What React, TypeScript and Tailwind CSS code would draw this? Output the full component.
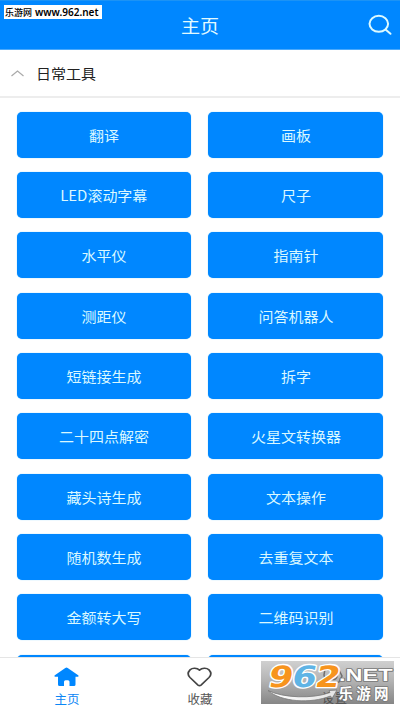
const tools = [
  '翻译', '画板',
  'LED滚动字幕', '尺子',
  '水平仪', '指南针',
  '测距仪', '问答机器人',
  '短链接生成', '拆字',
  '二十四点解密', '火星文转换器',
  '藏头诗生成', '文本操作',
  '随机数生成', '去重复文本',
  '金额转大写', '二维码识别',
  '', '',
];

function Watermark() {
  return (
    <svg className="absolute left-[261px] top-[661px] w-[133px] h-[43px]" viewBox="0 0 133 43">
      <defs>
        <linearGradient id="plate" x1="0" y1="0" x2="0" y2="1">
          <stop offset="0" stopColor="#d0d0d0" />
          <stop offset="0.45" stopColor="#b4b4b4" />
          <stop offset="1" stopColor="#868686" />
        </linearGradient>
        <linearGradient id="swoosh" x1="0" y1="0" x2="1" y2="0">
          <stop offset="0" stopColor="#ffffff" />
          <stop offset="1" stopColor="#e4e4e4" />
        </linearGradient>
      </defs>
      <rect width="133" height="43" fill="url(#plate)" />
      {/* the settings tab shows through the plate */}
      <g fill="none" stroke="#6f6f6f" strokeWidth="1.500">
        <path d="M64 8l5 1 4-2 5 2 3 6-3 6-4 2-6-1-4-3-1-5z" />
        <circle cx="72.500" cy="15" r="3.500" />
      </g>
      <text x="61" y="42" fontSize="12" fill="#4d4d4d" textLength="25">设置</text>
      <path d="M7 29.500C22 37 52 38 69 31.500l-1-2 8-.5-5 8.500-1.500-2.500C50 43 20 41 7 29.500z" fill="url(#swoosh)" stroke="#777" strokeWidth="0.800" />
      <g
        fontFamily="'DejaVu Sans', sans-serif"
        fontSize="29.500"
        fontWeight="700"
        stroke="#fff"
        strokeWidth="2.600"
        strokeLinejoin="round"
        paintOrder="stroke"
        transform="translate(0 25.500) skewX(-11)"
      >
        <text x="6" y="0" fill="#f7941d" textLength="24.500" lengthAdjust="spacingAndGlyphs">9</text>
        <text x="29.500" y="0" fill="#5fb4e5" textLength="24.500" lengthAdjust="spacingAndGlyphs">6</text>
        <text x="53" y="0" fill="#f7941d" textLength="24.500" lengthAdjust="spacingAndGlyphs">2</text>
      </g>
      <g fill="#fff" stroke="#777" strokeWidth="1.600" paintOrder="stroke" strokeLinejoin="round" fontWeight="700">
        <text x="78" y="20" fontSize="17" fontFamily="'Liberation Sans', sans-serif" textLength="53.500" lengthAdjust="spacingAndGlyphs">.NET</text>
        <text x="77.500" y="37.500" fontSize="14.500" textLength="50">乐游网</text>
      </g>
    </svg>
  );
}

export default function App() {
  return (
    <div className="relative flex flex-col w-[400px] h-[710px] overflow-hidden bg-white font-['Noto_Sans_CJK_SC',sans-serif]">
      <header className="relative flex h-[50px] shrink-0 items-center justify-center bg-[#0087ff] border-t border-b border-t-[#1c93f5] border-b-[#4ba9fb]">
        <h1 className="text-[18px] leading-none text-[#e2faff] scale-x-[1.06]">主页</h1>
        <svg className="absolute left-[368px] top-[13px] w-[26px] h-[22px]" viewBox="0 0 26 22" fill="none" stroke="#dcfaff" strokeWidth="2" strokeLinecap="round">
          <ellipse cx="10.800" cy="9.800" rx="9.300" ry="8" />
          <path d="M17.500 15.500l5 4.300" />
        </svg>
      </header>

      <div className="flex h-[48px] shrink-0 items-center border-b-2 border-[#ededed] pl-[11px]">
        <svg className="w-[13px] h-[7px]" viewBox="0 0 13 7" fill="none" stroke="#aaa" strokeWidth="1.200">
          <path d="M0.500 6l6-5 6 5" />
        </svg>
        <span className="ml-[11.500px] origin-left scale-x-[1.07] text-[14px] leading-none text-[#222]">日常工具</span>
      </div>

      <main className="grid min-h-0 flex-1 grid-cols-2 content-start gap-x-[17px] gap-y-[14.350px] overflow-hidden pl-[16.500px] pr-[17px] pt-[13.700px]">
        {tools.map((name, i) => (
          <button key={i} className="flex h-[46px] items-center justify-center rounded-[5px] bg-[#0087ff] shadow-[0_0_1px_#58bdff]">
            <span className="scale-x-[1.070] text-[14px] leading-none text-[#daf8ff]">{name}</span>
          </button>
        ))}
      </main>

      <nav className="grid h-[53px] shrink-0 grid-cols-3 border-t border-[#e5e5e5] bg-white text-[12px] leading-none">
        <div className="flex flex-col items-center pt-[9px] text-[#0b86f5]">
          <svg className="w-[25px] h-[20px]" viewBox="0 0 25 20" fill="#0087ff">
            <path d="M11.300 1q1.200-.9 2.400 0l10.500 7.200q1 1-.4 1.500h-2.300v7.800q0 1.500-1.500 1.500h-4.500v-4.200q0-1.500-1.500-1.500h-2.500q-1.500 0-1.500 1.500V19H5.500Q4 19 4 17.500V9.700H1.200Q-.2 9.200.8 8.200z" />
          </svg>
          <span className="mt-[6px] scale-x-[1.040]">主页</span>
        </div>
        <div className="flex flex-col items-center pt-[9px] text-[#555]">
          <svg className="w-[25px] h-[20px]" viewBox="0 0 25 20" fill="none" stroke="#444" strokeWidth="1.700" strokeLinejoin="round">
            <path d="M12.500 3.200C10 .8 5.500.6 3 2.800.700 5.300.800 8.300 3 10.500l8 7.600q1.500 1.200 3 0l8-7.600c2.200-2.200 2.300-5.200 0-7.700C19.500.6 15 .8 12.500 3.200z" />
          </svg>
          <span className="mt-[6px] scale-x-[1.040]">收藏</span>
        </div>
      </nav>

      <Watermark />
      <div className="absolute left-[4px] top-[5px] flex h-[14px] w-[98px] items-center whitespace-nowrap bg-white text-[9px] leading-none text-black">
        <span className="ml-px font-medium">乐游网</span>
        <span className="ml-[3px] font-['Noto_Sans'] text-[10px] font-semibold">www.962.net</span>
      </div>
    </div>
  );
}
